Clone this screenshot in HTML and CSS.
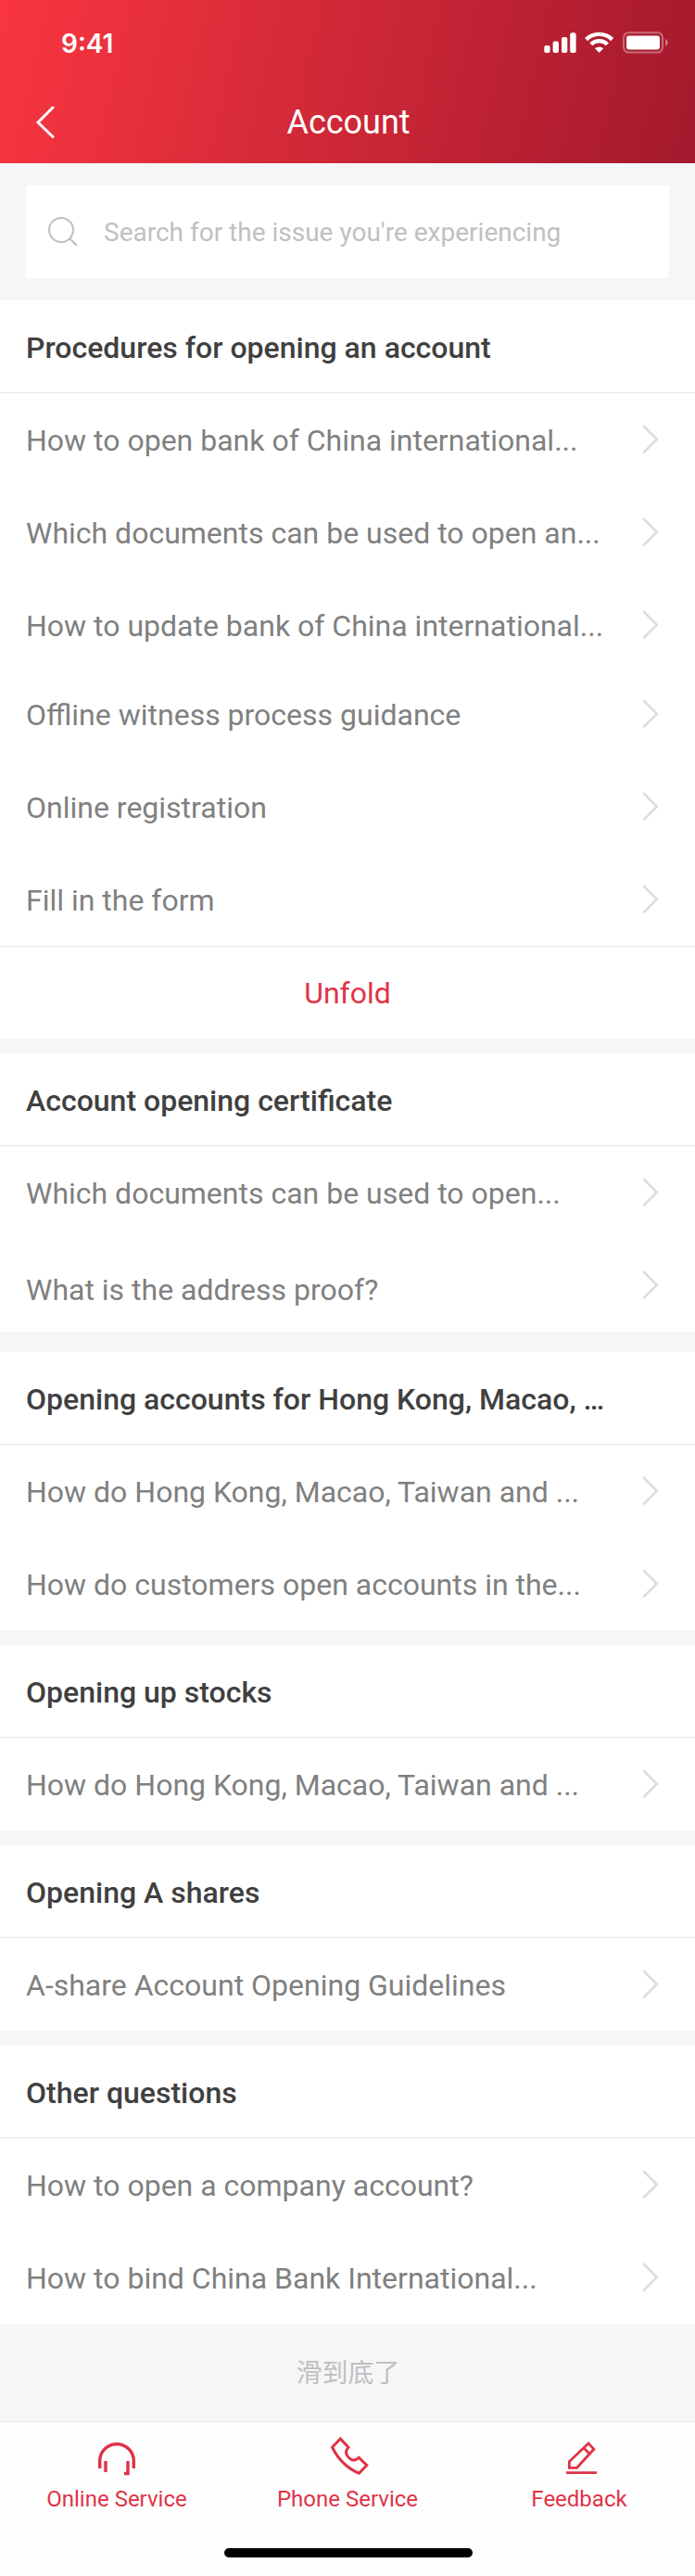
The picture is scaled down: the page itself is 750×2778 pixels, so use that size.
FILE: index.html
```html
<!DOCTYPE html>
<html lang="en">
<head>
<meta charset="utf-8">
<title>Account</title>
<link rel="stylesheet" href="styles.css">
</head>
<body>
<svg class="defs" width="0" height="0">
  <symbol id="chevron" viewBox="0 0 18 32"><path d="M1.2 1.2 15.800 15.800 1.2 30.400" fill="none" stroke="#dcdcdc" stroke-width="2.600"/></symbol>
</svg>
<div class="page">
  <header class="header">
    <div class="status">
      <span class="time">9:41</span>
      <svg class="indicators" width="136" height="26" viewBox="0 0 136 26" fill="#fff">
        <rect x="2.3" y="17" width="6.3" height="8" rx="2"/>
        <rect x="11.6" y="12.6" width="6.3" height="12.4" rx="2"/>
        <rect x="21" y="8" width="6.3" height="17" rx="2"/>
        <rect x="30.2" y="3.3" width="6.4" height="21.7" rx="2"/>
        <g fill="none" stroke="#fff" stroke-width="4.4">
          <path d="M47.6 10.6a20 20 0 0 1 28 0"/>
          <path d="M52.8 15.7a12.5 12.5 0 0 1 17.6 0"/>
        </g>
        <path d="M61.6 24.8 57 20.3a6.6 6.6 0 0 1 9.2 0z"/>
        <rect x="88" y="3.200" width="42" height="21.400" rx="5.500" fill="none" stroke="#fff" stroke-opacity=".35" stroke-width="2"/>
        <rect x="91" y="6.500" width="36" height="15" rx="3"/>
        <path d="M133 10v8a4.300 4.300 0 0 0 0-8z" fill-opacity=".4"/>
      </svg>
    </div>
    <div class="navbar">
      <svg class="back" width="22" height="36" viewBox="0 0 22 36"><path d="M19 2 3 18l16 15.500" fill="none" stroke="#fff" stroke-width="3" stroke-linecap="round"/></svg>
      <h1 class="title">Account</h1>
    </div>
  </header>

  <div class="search">
    <div class="search-box">
      <svg width="34" height="34" viewBox="0 0 34 34" fill="none" stroke="#c0c0c0" stroke-width="2"><circle cx="15" cy="15" r="13"/><path d="m24.500 24.500 7.500 7.500" stroke-width="2.300"/></svg>
      <span class="placeholder">Search for the issue you're experiencing</span>
    </div>
  </div>

  <section class="group">
    <h2 class="heading">Procedures for opening an account</h2>
    <div class="row"><span>How to open bank of China international...</span><svg class="arrow"><use href="#chevron"/></svg></div>
    <div class="row"><span>Which documents can be used to open an...</span><svg class="arrow"><use href="#chevron"/></svg></div>
    <div class="row row-tight"><span>How to update bank of China international...</span><svg class="arrow"><use href="#chevron"/></svg></div>
    <div class="row"><span>Offline witness process guidance</span><svg class="arrow"><use href="#chevron"/></svg></div>
    <div class="row"><span>Online registration</span><svg class="arrow"><use href="#chevron"/></svg></div>
    <div class="row"><span>Fill in the form</span><svg class="arrow"><use href="#chevron"/></svg></div>
    <div class="unfold">Unfold</div>
  </section>

  <section class="group group-spaced">
    <h2 class="heading">Account opening certificate</h2>
    <div class="row"><span>Which documents can be used to open...</span><svg class="arrow"><use href="#chevron"/></svg></div>
    <div class="row"><span class="lowered">What is the address proof?</span><svg class="arrow"><use href="#chevron"/></svg></div>
  </section>

  <section class="group">
    <h2 class="heading">Opening accounts for Hong Kong, Macao, …</h2>
    <div class="row"><span>How do Hong Kong, Macao, Taiwan and ...</span><svg class="arrow"><use href="#chevron"/></svg></div>
    <div class="row"><span>How do customers open accounts in the...</span><svg class="arrow"><use href="#chevron"/></svg></div>
  </section>

  <section class="group">
    <h2 class="heading">Opening up stocks</h2>
    <div class="row"><span>How do Hong Kong, Macao, Taiwan and ...</span><svg class="arrow"><use href="#chevron"/></svg></div>
  </section>

  <section class="group">
    <h2 class="heading">Opening A shares</h2>
    <div class="row"><span>A-share Account Opening Guidelines</span><svg class="arrow"><use href="#chevron"/></svg></div>
  </section>

  <section class="group group-last">
    <h2 class="heading">Other questions</h2>
    <div class="row"><span>How to open a company account?</span><svg class="arrow"><use href="#chevron"/></svg></div>
    <div class="row"><span>How to bind China Bank International...</span><svg class="arrow"><use href="#chevron"/></svg></div>
  </section>

  <div class="end" lang="zh-CN">滑到底了</div>

  <footer class="footer">
    <nav class="tabs">
      <div class="tab tab-online">
        <svg width="48" height="48" viewBox="0 0 48 48" fill="none" stroke="#e03347" stroke-width="3.400"><path d="M5.700 38v-8a18.300 18.300 0 0 1 36.600 0v8M12 30v12M36 30v13.500h-4"/></svg>
        <span>Online Service</span>
      </div>
      <div class="tab">
        <svg width="48" height="48" viewBox="-1 0 48 48" fill="none" stroke="#e03347" stroke-width="3"><path d="M15.300 6 6.500 15.200C12.500 27 23 38 35.500 43.200L43.800 34.500 35.300 26.300C31.500 30 28 30 24.500 26.500S20.500 19 24 15.200z"/></svg>
        <span>Phone Service</span>
      </div>
      <div class="tab">
        <svg width="48" height="48" viewBox="0 0 48 48" fill="none" stroke="#e03347" stroke-width="2.800"><path d="M10 42.600h33M13.400 37.300v-6.700L34 10.900l5.900 6.300L21.500 37.300zM28.800 15.800l6.200 6.200"/></svg>
        <span>Feedback</span>
      </div>
    </nav>
    <div class="home-bar"></div>
  </footer>
</div>
</body>
</html>
```

FILE: styles.css
```css
* { box-sizing: border-box; }
body { margin: 0; background: #f5f6f8; font-family: Roboto, "Noto Sans CJK SC", sans-serif; }
.defs { display: block; position: absolute; }
.page { width: 750px; height: 2778px; display: flex; flex-direction: column; }

.header { height: 176px; color: #fff; background: linear-gradient(103deg, #f93640 0%, #a3192d 100%); }
.status { height: 88px; padding: 32px 30px 0 66px; display: flex; justify-content: space-between; align-items: flex-start; }
.time { font: 600 28px/30px Inter, sans-serif; }
.indicators { display: block; margin-right: -1px; }
.navbar { height: 88px; padding: 0 38px; display: grid; grid-template-columns: 22px 1fr 22px; align-items: center; }
.title { margin: 0; padding-left: 2px; font-size: 36px; font-weight: 400; line-height: 42px; text-align: center; }

.search { height: 148px; padding: 24px 28px; }
.search-box { height: 100px; padding-left: 23px; background: #fff; border-radius: 4px; display: flex; align-items: center; gap: 27px; }
.placeholder { padding-top: 2px; font-size: 28px; line-height: 34px; color: #c0c0c0; }

.group { background: #fff; margin-bottom: 16px; }
.group-spaced { margin-bottom: 22px; }
.group-last { margin-bottom: 0; }
.heading { margin: 0; height: 100px; padding: 7px 28px 0; border-bottom: 1px solid #e8e8e8; font-size: 32px; font-weight: 500; line-height: 89px; color: #404040; white-space: nowrap; }
.row { height: 100px; padding: 7px 39px 0 28px; display: flex; justify-content: space-between; font-size: 32px; line-height: 89px; color: #808080; white-space: nowrap; }
.row-tight { height: 96px; }
.arrow { width: 18px; height: 32px; margin-top: 27px; }
.lowered { padding-top: 4px; }
.unfold { height: 100px; border-top: 1px solid #e8e8e8; text-align: center; font-size: 32px; line-height: 100px; color: #e03347; }

.end { height: 105px; text-align: center; font-family: "Noto Sans CJK SC", sans-serif; font-size: 28px; line-height: 103px; padding-left: 1px; color: #c0c0c0; }

.footer { height: 167px; border-top: 1px solid #e8e8e8; background: #fefefe; }
.tabs { display: grid; grid-template-columns: repeat(3, 250px); padding-top: 12px; height: 136px; }
.tab { display: flex; flex-direction: column; align-items: center; gap: 9px; color: #e03347; font-size: 24px; line-height: 28px; }
.tab-online { padding-left: 2px; }
.home-bar { width: 268px; height: 10px; margin: 0 0 0 242px; border-radius: 5px; background: #000; }
```
